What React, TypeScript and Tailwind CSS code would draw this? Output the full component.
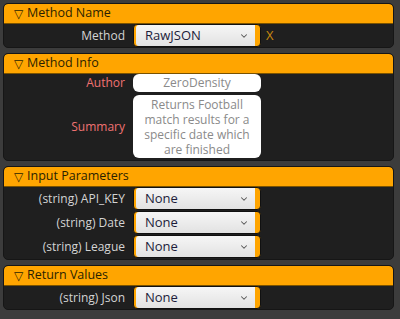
import React from "react";
import { ChevronDown } from "lucide-react";

const font = { fontFamily: '"Open Sans", "Noto Sans", sans-serif' };

const Header = ({ title }: { title: string }) => (
  <div className="h-[20px] flex items-center bg-[#ffa500] border-b border-[#7a5200] rounded-t-[4px] pl-[10px] text-[12.5px] text-[#2a1f00]">
    <span className="text-[12px] mr-[4px] leading-none">▽</span>
    <span className="leading-none">{title}</span>
  </div>
);

const Dropdown = ({ value }: { value: string }) => (
  <div className="w-[128px] h-[23px] flex bg-[#ffa500] border border-[#111] rounded-[4px] pl-[2px] pr-[5px]">
    <div className="flex-1 flex items-center justify-between bg-gradient-to-b from-[#f6f6f6] to-[#e2e2e2] rounded-l-[3px] pl-[9px] pr-[6px] text-[13px] text-[#1c1c3a]">
      <span>{value}</span>
      <ChevronDown size={10} strokeWidth={2.5} className="text-[#555]" />
    </div>
  </div>
);

const Label = ({ text, red }: { text: string; red?: boolean }) => (
  <div className={`w-[129px] pr-[8px] text-right text-[12px] ${red ? "text-[#f07272]" : "text-[#d4d4d4]"}`}>
    {text}
  </div>
);

const Panel = ({ title, children }: { title: string; children: React.ReactNode }) => (
  <div className="bg-[#1f1f1f] border border-[#161616] rounded-[5px] overflow-hidden">
    <Header title={title} />
    {children}
  </div>
);

export default function App() {
  return (
    <div style={font} className="w-[400px] h-[319px] bg-[#3c3c3c] pl-[3px] pr-[6px] pt-[3px] flex flex-col gap-[5px]">
      <Panel title="Method Name">
        <div className="h-[23px] flex items-center">
          <Label text="Method" />
          <Dropdown value="RawJSON" />
          <span className="ml-[5px] text-[13px] text-[#c98a0e]">X</span>
        </div>
      </Panel>
      <Panel title="Method Info">
        <div className="pt-[0px] pb-[2px] flex flex-col gap-[3px]">
          <div className="flex items-center">
            <Label text="Author" red />
            <div className="w-[128px] h-[18px] bg-white rounded-[6px] flex items-center justify-center text-[12px] text-[#8a8a8a]">
              ZeroDensity
            </div>
          </div>
          <div className="flex items-center">
            <Label text="Summary" red />
            <div className="w-[128px] h-[63px] bg-white rounded-[6px] flex items-center justify-center text-center text-[12px] leading-[15px] text-[#8a8a8a] px-[4px]">
              Returns Football match results for a specific date which are finished
            </div>
          </div>
        </div>
      </Panel>
      <Panel title="Input Parameters">
        <div className="pb-[1px] flex flex-col gap-[1px]">
          <div className="flex items-center">
            <Label text="(string) API_KEY" />
            <Dropdown value="None" />
          </div>
          <div className="flex items-center">
            <Label text="(string) Date" />
            <Dropdown value="None" />
          </div>
          <div className="flex items-center">
            <Label text="(string) League" />
            <Dropdown value="None" />
          </div>
        </div>
      </Panel>
      <Panel title="Return Values">
        <div className="pb-[0px] flex items-center">
          <Label text="(string) Json" />
          <Dropdown value="None" />
        </div>
      </Panel>
    </div>
  );
}
